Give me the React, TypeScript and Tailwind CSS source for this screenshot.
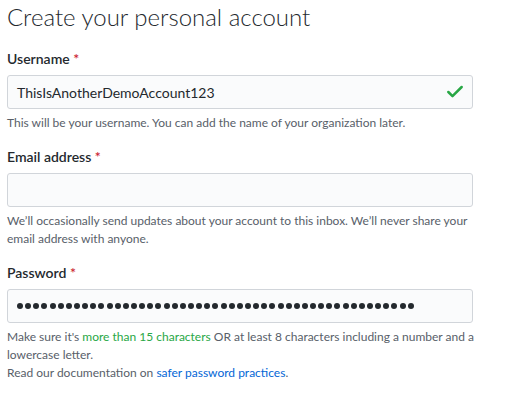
import { Check } from "lucide-react"

function Label({ children }: { children: string }) {
  return (
    <label className="block text-[14px] font-semibold leading-[20px] text-[#24292e]">
      {children} <span className="text-[#cb2431]">*</span>
    </label>
  )
}

export default function App() {
  const dots = Array.from({ length: 49 })
  return (
    <div className="w-[513px] h-[401px] bg-white px-[7px] text-[#24292e] font-['Segoe_UI',Lato,'Noto_Sans',sans-serif]">
      <h1 className="pt-[2px] text-[24px] font-light leading-[30px]">Create your personal account</h1>

      <div className="mt-[17px]">
        <Label>Username</Label>
        <div className="mt-[6px] flex h-[34px] w-[466px] items-center justify-between rounded-[3px] border border-[#d1d5da] bg-[#fafbfc] pl-[9px] pr-[7px] text-[14px]">
          <span>ThisIsAnotherDemoAccount123</span>
          <Check className="h-[20px] w-[20px] text-[#28a745]" strokeWidth={3} />
        </div>
        <p className="mt-[5px] text-[12px] leading-[18px] text-[#586069]">
          This will be your username. You can add the name of your organization later.
        </p>
      </div>

      <div className="mt-[15px]">
        <Label>Email address</Label>
        <div className="mt-[6px] h-[34px] w-[466px] rounded-[3px] border border-[#d1d5da] bg-[#fafbfc]" />
        <p className="mt-[5px] text-[12px] leading-[18px] text-[#586069]">
          We’ll occasionally send updates about your account to this inbox. We’ll never share your
          <br />
          email address with anyone.
        </p>
      </div>

      <div className="mt-[15px]">
        <Label>Password</Label>
        <div className="mt-[6px] flex h-[34px] w-[466px] items-center gap-[2.15px] rounded-[3px] border border-[#d1d5da] bg-[#fafbfc] pl-[9px]">
          {dots.map((_, i) => (
            <span key={i} className="size-[6px] shrink-0 rounded-full bg-[#24292e]" />
          ))}
        </div>
        <p className="mt-[5px] text-[12px] leading-[18px] text-[#586069]">
          Make sure it's <span className="text-[#28a745]">more than 15 characters</span> OR at least 8 characters including a number and a
          <br />
          lowercase letter.
          <br />
          Read our documentation on <span className="text-[#0366d6]">safer password practices</span>.
        </p>
      </div>
    </div>
  )
}
